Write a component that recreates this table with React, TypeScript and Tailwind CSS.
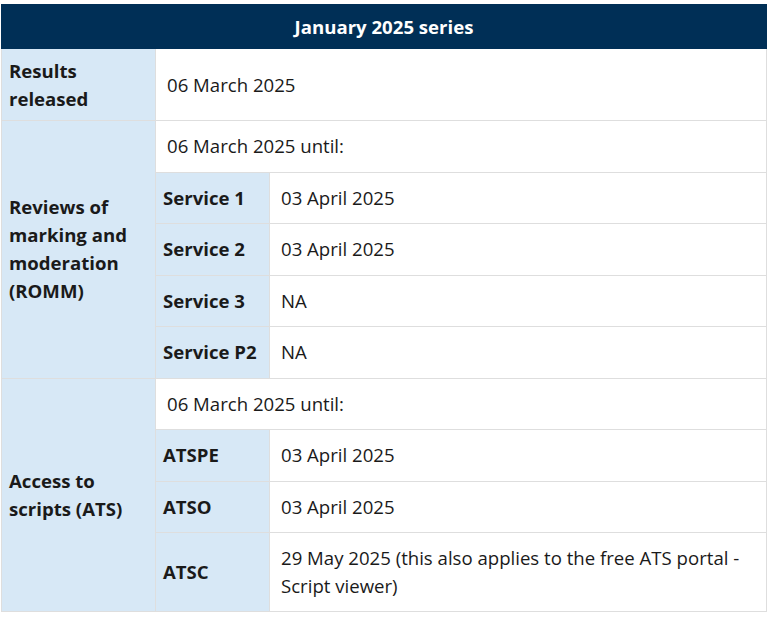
const label = 'bg-[#d7e8f6] font-bold text-[#1a1a1a] border border-[#dedede] px-[7px] align-middle text-left';
const cell = 'bg-white text-[#1a1a1a] border border-[#dedede] px-[11px] py-[11px] align-middle text-left';

const romm = [
  ['Service 1', '03 April 2025'],
  ['Service 2', '03 April 2025'],
  ['Service 3', 'NA'],
  ['Service P2', 'NA'],
];

const ats = [
  ['ATSPE', '03 April 2025'],
  ['ATSO', '03 April 2025'],
  ['ATSC', '29 May 2025 (this also applies to the free ATS portal - Script viewer)'],
];

export default function App() {
  return (
    <div className="bg-white pt-[4px] pl-[1px] min-h-[623px]" style={{ fontFamily: '"Open Sans", sans-serif' }}>
      <table className="w-[766px] border-collapse text-[18.6px] leading-[28px] table-fixed">
        <colgroup>
          <col className="w-[154px]" />
          <col className="w-[114px]" />
          <col />
        </colgroup>
        <tbody>
          <tr>
            <th colSpan={3} className="bg-[#002f56] text-white font-bold text-center h-[44px] py-[7px] border border-[#002f56]">
              January 2025 series
            </th>
          </tr>
          <tr>
            <td className={label + ' h-[72px]'}>Results released</td>
            <td colSpan={2} className={cell}>06 March 2025</td>
          </tr>
          <tr>
            <td rowSpan={5} className={label}>Reviews of marking and moderation (ROMM)</td>
            <td colSpan={2} className={cell + ' h-[51.5px]'}>06 March 2025 until:</td>
          </tr>
          {romm.map(([k, v]) => (
            <tr key={k}>
              <td className={label + ' h-[51.5px]'}>{k}</td>
              <td className={cell}>{v}</td>
            </tr>
          ))}
          <tr>
            <td rowSpan={4} className={label}>Access to scripts (ATS)</td>
            <td colSpan={2} className={cell + ' h-[51.5px]'}>06 March 2025 until:</td>
          </tr>
          {ats.map(([k, v]) => (
            <tr key={k}>
              <td className={label + ' h-[51.5px]'}>{k}</td>
              <td className={cell}>{v}</td>
            </tr>
          ))}
        </tbody>
      </table>
    </div>
  );
}
